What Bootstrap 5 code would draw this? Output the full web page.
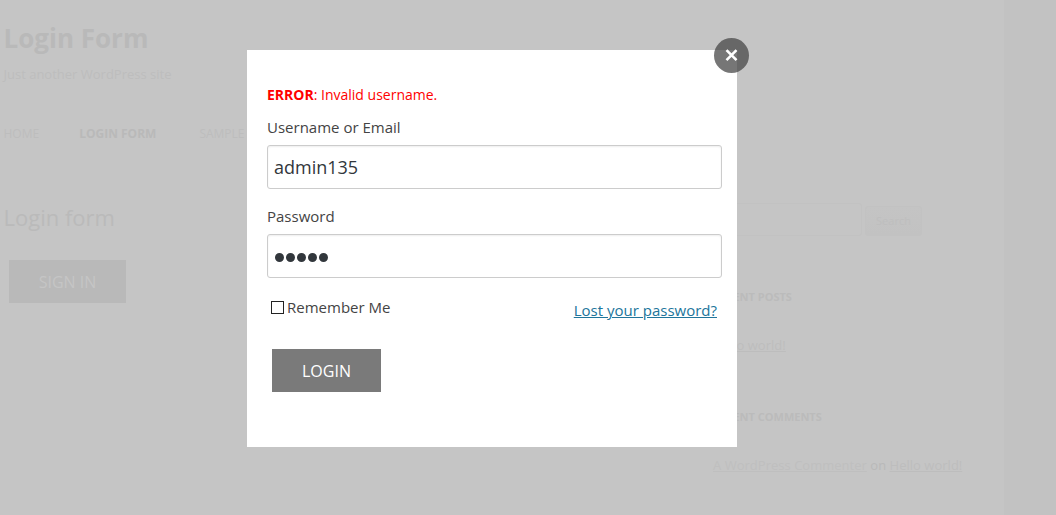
<!DOCTYPE html>
<html lang="en">
<head>
<meta charset="utf-8">
<meta name="viewport" content="width=device-width, initial-scale=1">
<title>Login Form</title>
<link href="https://cdn.jsdelivr.net/npm/bootstrap@5.3.0/dist/css/bootstrap.min.css" rel="stylesheet">
<style>
body{font-family:"Open Sans",sans-serif;background:#c2c2c2;color:#b9b9b9;height:515px;overflow:hidden;font-size:13px}
.site{width:1004px;height:515px;background:#c5c5c5;padding:20px 41px 0 3.5px}
.site h1{font-size:26px;font-weight:700;line-height:36px;margin:0;color:#b9b9b9}
.tagline{font-size:13px;line-height:20px;margin-top:8px;color:#bdbdbd}
.menu{font-size:12px;line-height:20px;margin-top:40px;gap:40px;color:#bdbdbd}
.menu b{color:#b9b9b9}
.menu .sample{margin-left:3px}
.content{margin-top:59px}
.site h2{font-size:22px;font-weight:400;line-height:30px;margin:-1px 0 0;color:#bababa}
.sign{margin:28px 0 0 5.5px;width:117px;height:43px;border:0;border-radius:0;background:#b9b9b9;color:#c5c5c5;font-size:16px;padding:0}
.side{width:250px}
.find{width:149px;height:33px;border:1px solid #c2c2c2;border-radius:3px}
.find-btn{width:57px;height:30px;margin-left:3px;border:1px solid #c2c2c2;border-radius:3px;font-size:11px;color:#bebebe;background:linear-gradient(#c4c4c4,#c2c2c2);padding:0}
.side h3{font-size:11px;font-weight:700;line-height:20px;margin:51px 0 0;color:#bbb}
.side h3.second{margin-top:52px}
.entry{line-height:20px;white-space:nowrap;margin-top:28px;letter-spacing:.02px}
.side a{color:#bdbdbd}
.side a.author{color:#bfbfbf}
.dialog-box{position:absolute;left:247px;top:50px;width:490px;height:397px;background:#fff;padding:35px 15px 0 20px;color:#444;font-size:15px}
.close-btn{position:absolute;right:-12px;top:-12px;width:35px;height:35px;border:0;border-radius:50%;background:rgba(70,70,70,.74);padding:0}
.error{color:#f00;font-size:14px;line-height:20px;margin:0}
.dialog-box label{line-height:20px;display:block}
.user-label{margin-top:12px}
.pass-label{margin-top:17px}
.field{height:44px;border:1px solid #ccc;border-radius:3px;font-size:18px;color:#32373c;padding:0 6px;box-shadow:inset 0 1px 2px rgba(0,0,0,.07);margin-top:8px}
.dots{display:flex;align-items:center;gap:1.9px;padding-top:3px;padding-left:7px}
.dots i{width:9px;height:9px;border-radius:50%;background:#32373c}
.options{margin-top:19px}
.tick{appearance:none;width:13px;height:13px;border:1px solid #222;background:#fff;margin:0 3px 0 4px}
.lost{color:#21759b;line-height:20px;margin:3px 5px 0 0}
.login{width:109px;height:43px;border:0;border-radius:0;background:#7a7a7a;color:#fff;font-size:16px;margin:29px 0 0 5px;padding:0}
</style>
</head>
<body>
<div class="site">
  <header>
    <h1>Login Form</h1>
    <div class="tagline">Just another WordPress site</div>
    <nav class="menu d-flex text-nowrap"><span>HOME</span><b>LOGIN FORM</b><span class="sample">SAMPLE</span></nav>
  </header>
  <div class="content d-flex justify-content-between">
    <main>
      <h2>Login form</h2>
      <button class="btn sign">SIGN IN</button>
    </main>
    <aside class="side">
      <div class="d-flex align-items-end"><div class="find"></div><button class="btn find-btn">Search</button></div>
      <h3>RECENT POSTS</h3>
      <div class="entry"><a href="#">Hello world!</a></div>
      <h3 class="second">RECENT COMMENTS</h3>
      <div class="entry"><a class="author" href="#">A WordPress Commenter</a> on <a href="#">Hello world!</a></div>
    </aside>
  </div>
</div>
<div class="dialog-box">
  <button class="close-btn d-flex align-items-center justify-content-center" aria-label="Close">
    <svg width="13" height="13" viewBox="0 0 13 13"><path d="M1.5 1.2 11.5 11.2M11.5 1.2 1.5 11.2" stroke="#fff" stroke-width="2.6"/></svg>
  </button>
  <p class="error"><b>ERROR</b>: Invalid username.</p>
  <label class="user-label">Username or Email</label>
  <input class="form-control field" type="text" value="admin135">
  <label class="pass-label">Password</label>
  <div class="field dots"><i></i><i></i><i></i><i></i><i></i></div>
  <div class="options d-flex justify-content-between align-items-start">
    <label class="d-flex align-items-center"><input class="tick" type="checkbox">Remember Me</label>
    <a class="lost" href="#">Lost your password?</a>
  </div>
  <button class="btn login">LOGIN</button>
</div>
<script src="https://cdn.jsdelivr.net/npm/bootstrap@5.3.0/dist/js/bootstrap.bundle.min.js"></script>
</body>
</html>
